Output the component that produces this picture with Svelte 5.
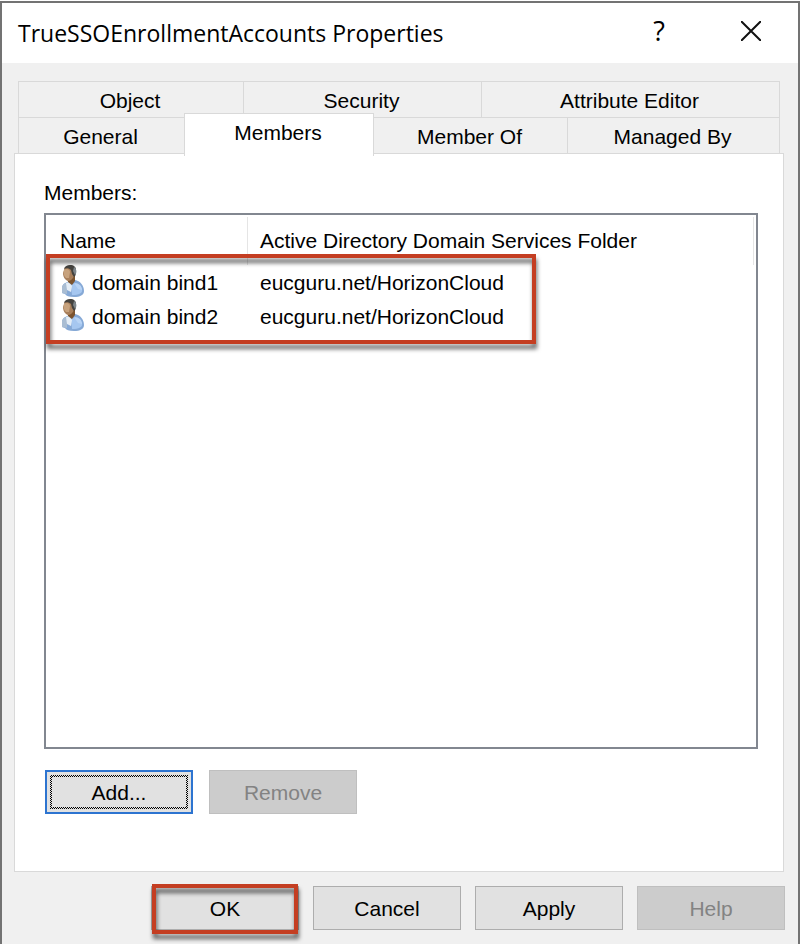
<script lang="ts">
	type Tab = { id: string; label: string };

	const backTabs: Tab[] = [
		{ id: 'object', label: 'Object' },
		{ id: 'security', label: 'Security' },
		{ id: 'attributes', label: 'Attribute Editor' }
	];

	const frontTabs: Tab[] = [
		{ id: 'general', label: 'General' },
		{ id: 'members', label: 'Members' },
		{ id: 'memberof', label: 'Member Of' },
		{ id: 'managedby', label: 'Managed By' }
	];

	const members = [
		{ name: 'domain bind1', folder: 'eucguru.net/HorizonCloud' },
		{ name: 'domain bind2', folder: 'eucguru.net/HorizonCloud' }
	];

	let activeTab = $state('members');
</script>

{#snippet tabButton(tab: Tab)}
	<button
		type="button"
		role="tab"
		class="tab"
		class:active={activeTab === tab.id}
		aria-selected={activeTab === tab.id}
		onclick={() => (activeTab = tab.id)}
	>
		{tab.label}
	</button>
{/snippet}

{#snippet userIcon()}
	<svg class="user-icon" viewBox="0 0 22 32" aria-hidden="true">
		<path d="M0 22 C1 18 5 17 9 16 L13 15 C18 16 22 20 22 26 C22 30 18 32 12 32 C7 32 4 31 3 29 L0 28 Z" fill="#86a9d6" />
		<path d="M0 22 C1 19 3 18 5 18 L5 29 L0 28 Z" fill="#a9bdd3" />
		<path d="M9 20 C13 17 18 19 20 24 C21 28 17 30 10 30 Z" fill="#a6c7f0" />
		<path d="M12 18 C17 18 20 21 20 25 L16 24 Z" fill="#b9d4f5" />
		<path d="M4 18 L7 17 L10 21 L9 27 L5 25 Z" fill="#e4edf6" />
		<path d="M5 10 H13 V16 L10 20 L6 17 Z" fill="#7c542f" />
		<path d="M3 2 H12 V11 C11 14 8 16 6 16 C3 15 1 12 1 8 Z" fill="#a87f5b" />
		<path d="M2 5 C4 3 8 4 8 7 L7 13 L4 13 C2 11 1 9 2 5 Z" fill="#c7a27d" />
		<path d="M2 4 C3 1 5 0 8 0 C12 0 14 2 14 5 C14 8 14 11 12 12 L10 9 L9 5 C7 3 4 3 2 4 Z" fill="#44423e" />
		<path d="M12 2 C15 4 15 8 13 10 L11 6 Z" fill="#7e868b" />
	</svg>
{/snippet}

<div class="desktop">
	<main class="window">
		<header class="titlebar">
			<h1>TrueSSOEnrollmentAccounts Properties</h1>
			<div class="controls">
				<button type="button" class="control" aria-label="Context help">?</button>
				<button type="button" class="control" aria-label="Close">
					<svg class="close-icon" viewBox="0 0 20 20" aria-hidden="true">
						<path d="M0 0 L20 20 M20 0 L0 20" fill="none" stroke="#111" stroke-width="2" />
					</svg>
				</button>
			</div>
		</header>

		<div class="content">
			<div class="tabs" role="tablist">
				<div class="tab-row back">
					{#each backTabs as tab (tab.id)}
						{@render tabButton(tab)}
					{/each}
				</div>
				<div class="tab-row front">
					{#each frontTabs as tab (tab.id)}
						{@render tabButton(tab)}
					{/each}
				</div>
			</div>

			<section class="panel" role="tabpanel">
				<h2 id="members-label">Members:</h2>
				<div class="list">
					<table aria-labelledby="members-label">
						<thead>
							<tr>
								<th class="name-col">Name</th>
								<th>Active Directory Domain Services Folder</th>
							</tr>
						</thead>
						<tbody>
							{#each members as member (member.name)}
								<tr>
									<td>
										<div class="member">
											{@render userIcon()}
											<span>{member.name}</span>
										</div>
									</td>
									<td>{member.folder}</td>
								</tr>
							{/each}
						</tbody>
					</table>
					<div class="highlight rows"></div>
				</div>
				<div class="list-actions">
					<button type="button" class="btn focused"><span>Add...</span></button>
					<button type="button" class="btn" disabled>Remove</button>
				</div>
			</section>
		</div>

		<footer class="footer">
			<div class="marked">
				<button type="button" class="btn">OK</button>
				<div class="highlight ok"></div>
			</div>
			<button type="button" class="btn">Cancel</button>
			<button type="button" class="btn">Apply</button>
			<button type="button" class="btn" disabled>Help</button>
		</footer>
	</main>
</div>

<style>
	:global(body) {
		margin: 0;
		background: #fff;
	}

	.desktop {
		display: flex;
		box-sizing: border-box;
		min-height: 100vh;
		padding-top: 1px;
		font-family: 'Liberation Sans', Arial, sans-serif;
		font-size: 21px;
		line-height: 28px;
		color: #000;
	}

	.window {
		flex: 1;
		display: flex;
		flex-direction: column;
		min-width: 0;
		border: 2px solid #737373;
		border-bottom: none;
		background: #f0f0f0;
	}

	button {
		margin: 0;
		padding: 0;
		font: inherit;
		color: inherit;
	}

	.titlebar {
		display: flex;
		justify-content: space-between;
		height: 60px;
		padding-left: 16px;
		background: #fff;
	}

	h1 {
		margin: 0;
		font-family: 'Open Sans', 'Noto Sans', sans-serif;
		font-size: 23px;
		font-weight: 400;
		line-height: 60px;
		white-space: nowrap;
	}

	.controls {
		display: flex;
		padding-right: 1px;
	}

	.control {
		display: flex;
		align-items: center;
		justify-content: center;
		width: 92px;
		height: 56px;
		border: none;
		background: transparent;
		font-family: 'Open Sans', 'Noto Sans', sans-serif;
		font-size: 27px;
		font-weight: 500;
	}

	.close-icon {
		width: 20px;
		height: 20px;
	}

	.content {
		flex: 1;
		display: flex;
		flex-direction: column;
		padding: 18px 14px 0 12px;
	}

	.tabs {
		padding: 0 4px;
	}

	.tab-row {
		display: grid;
		height: 36px;
	}

	.back {
		grid-template-columns: 225fr 238fr 299fr;
	}

	.front {
		grid-template-columns: 166fr 190fr 193fr 213fr;
	}

	.tab {
		padding: 2px 2px 0 0;
		border: 1px solid #d9d9d9;
		border-right: none;
		border-bottom: none;
		background: #f0f0f0;
		white-space: nowrap;
	}

	.tab:last-child {
		border-right: 1px solid #d9d9d9;
	}

	.tab.active {
		z-index: 1;
		margin: -4px 0 -3px;
		padding: 0 2px 4px 0;
		border-right: 1px solid #d9d9d9;
		background: #fff;
	}

	.tab.active + .tab {
		border-left: none;
	}

	.panel {
		flex: 1;
		display: flex;
		flex-direction: column;
		padding: 25px 25px 57px 29px;
		border: 1px solid #d9d9d9;
		background: #fff;
	}

	h2 {
		margin: 0 0 6px;
		font-size: 21px;
		font-weight: 400;
		line-height: 28px;
	}

	.list {
		position: relative;
		flex: 1;
		padding-right: 2px;
		border: 2px solid #828790;
	}

	table {
		width: 100%;
		border-collapse: collapse;
		table-layout: fixed;
	}

	th,
	td {
		padding: 2px 0 0 12px;
		font-weight: 400;
		text-align: left;
		white-space: nowrap;
	}

	th {
		height: 48px;
		background: linear-gradient(#e5e5e5, #e5e5e5) right bottom / 1px 48px no-repeat;
	}

	.name-col {
		width: 188px;
		padding-left: 14px;
	}

	td {
		height: 32px;
	}

	.member {
		display: flex;
		gap: 8px;
		height: 32px;
		padding-left: 4px;
		line-height: 32px;
	}

	.user-icon {
		width: 22px;
		height: 32px;
		margin-top: -2px;
	}

	.list-actions {
		display: flex;
		gap: 16px;
		margin-top: 21px;
		padding-left: 1px;
	}

	.btn {
		box-sizing: border-box;
		width: 148px;
		height: 44px;
		padding: 2px 0 0;
		border: 1px solid #adadad;
		background: #e1e1e1;
	}

	.btn:disabled {
		border-color: #bfbfbf;
		background: #ccc;
		color: #838383;
	}

	.btn.focused {
		display: flex;
		padding: 3px;
		border: 2px solid #2d74d0;
	}

	/* dithered focus rectangle */
	.focused span {
		flex: 1;
		border: 2px solid transparent;
		line-height: 32px;
		height: 30px;
		background:
			linear-gradient(#e1e1e1, #e1e1e1) padding-box,
			repeating-conic-gradient(#000 0 25%, #e1e1e1 0 50%) 0 0 / 2px 2px border-box;
	}

	.footer {
		display: flex;
		justify-content: flex-end;
		gap: 14px;
		padding: 14px 13px 14px 0;
	}

	.marked {
		position: relative;
		display: flex;
	}

	.highlight {
		position: absolute;
		box-sizing: border-box;
		border: 4px solid #c43e22;
		filter: drop-shadow(1px 5px 2px rgba(0, 0, 0, 0.6));
		pointer-events: none;
	}

	.rows {
		top: 39px;
		left: 0;
		width: 490px;
		height: 90px;
	}

	.ok {
		inset: -2px 1px -4px;
	}
</style>
